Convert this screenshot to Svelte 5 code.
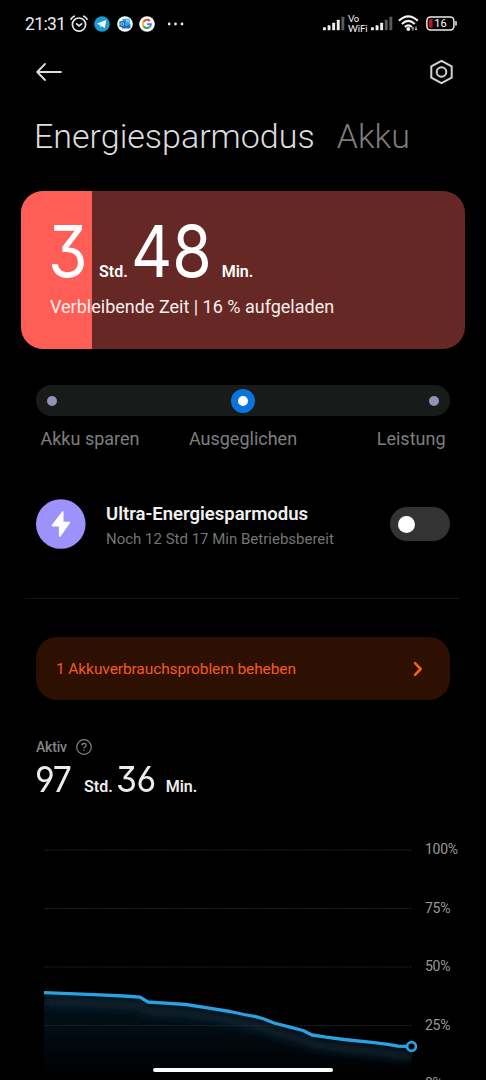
<script>
  const remaining = { hours: '3', minutes: '48', percent: 16 };
  const active = { hours: '97', minutes: '36' };

  const modes = ['Akku sparen', 'Ausgeglichen', 'Leistung'];
  let mode = $state(1);
  let ultra = $state(false);

  const levels = [100, 75, 50, 25, 0];
  const gridY = (level) => 20 + (100 - level) * 2.34;

  // x from the left edge of the plot, y from the top of the chart
  const points = [
    [0, 162.7], [50, 164.6], [80, 166], [96, 167.2], [104, 172], [125, 173.3], [142, 174.5],
    [165, 178.2], [186, 181.5], [200, 184.5], [212, 186.7], [220, 189], [230, 193],
    [246, 197.2], [259, 200.5], [268, 205], [282, 207.2], [300, 209.5], [328, 212.3],
    [344, 214.3], [354, 216.2], [368, 216.5]
  ];
  const line = 'M' + points.map((p) => p.join(' ')).join('L');
  const area = line + 'V250H0Z';
</script>

<div class="screen">
  <div class="status">
    <span class="clock">21:31</span>
    <svg class="alarm" width="18" height="18" viewBox="0 0 18 18">
      <g fill="none" stroke="#e8e8e8" stroke-width="1.7" stroke-linecap="round">
        <circle cx="9" cy="9.6" r="6.6" />
        <path d="M6.6 8.8L9 10.9L11.6 8.8" />
        <path d="M1 4.2Q2 2.2 4.2 1.2M17 4.2Q16 2.2 13.8 1.2" />
      </g>
    </svg>
    <svg class="app" width="16" height="16" viewBox="0 0 16 16">
      <circle cx="8" cy="8" r="7.8" fill="#1c9ad2" />
      <path d="M2.7 7.8L12.3 4L10.8 12.2L7.8 10.1L6.3 11.6L5.9 9Z" fill="#fff" />
      <path d="M5.9 9L10.3 5.9L7 9.5L6.3 11.6Z" fill="#a9d7ee" />
    </svg>
    <svg class="app" width="16" height="16" viewBox="0 0 16 16">
      <circle cx="8" cy="8" r="7.8" fill="#fff" />
      <rect x="5.4" y="2.8" width="7.4" height="8" rx=".6" fill="#38a2e0" />
      <path d="M9 2.8H12.8V6.4H9Z" fill="#60c6f4" />
      <path d="M4.8 8.2L9.4 10.2L13.4 7.4V12.6H4.8Z" fill="#1b6fc0" />
      <rect x="2.4" y="5.2" width="5.8" height="5.8" rx=".6" fill="#1468b8" />
      <circle cx="5.3" cy="8.1" r="1.5" fill="none" stroke="#b9dcf5" stroke-width=".9" />
    </svg>
    <svg class="app" width="16" height="16" viewBox="0 0 16 16">
      <circle cx="8" cy="8" r="7.8" fill="#fff" />
      <g fill="none" stroke-width="1.9">
        <path d="M10.9 5A4.1 4.1 0 0 0 4.4 6" stroke="#e44236" />
        <path d="M4.4 6A4.1 4.1 0 0 0 4.4 10" stroke="#f4b91f" />
        <path d="M4.4 10A4.1 4.1 0 0 0 10.6 11.1" stroke="#34a353" />
        <path d="M10.6 11.1A4.1 4.1 0 0 0 12 8.2H8" stroke="#4285e8" />
      </g>
    </svg>
    <svg class="dots" width="17" height="4" viewBox="0 0 17 4" fill="#e8e8e8">
      <circle cx="2.2" cy="2" r="1.4" /><circle cx="8.5" cy="2" r="1.4" /><circle cx="15" cy="2" r="1.4" />
    </svg>
    <div class="radio">
      {@render signal(4)}
      <span class="vowifi"><span>Vo</span><span>WiFi</span></span>
      {@render signal(3)}
      <svg class="wifi" width="21" height="17" viewBox="0 0 21 17">
        <g fill="none" stroke="#f2f2f2" stroke-width="2.1">
          <path d="M.9 5.8Q10.3 -3 19.8 5.8" />
          <path d="M3.9 9Q10.3 2.8 16.8 9" />
          <path d="M6.9 12Q10.3 8.7 13.8 12" />
        </g>
        <circle cx="10.3" cy="14" r="1.9" fill="#f2f2f2" />
        <path d="M14.9 15.6V12.4M14 13.4L14.9 12.4L15.8 13.4M18 11.6V15M17.1 14L18 15L18.9 14" fill="none" stroke="#f2f2f2" stroke-width=".9" />
      </svg>
      <svg class="battery" width="32" height="15" viewBox="0 0 32 15">
        <rect x=".9" y=".9" width="27" height="13" rx="3.6" fill="none" stroke="#ececec" stroke-width="1.5" />
        <path d="M4.4 3H6.6V11.8H4.4Q3 11.8 3 10.4V4.4Q3 3 4.4 3Z" fill="#c8101c" />
        <path d="M30 5.2V9.6" stroke="#ececec" stroke-width="1.6" />
        <text x="14.5" y="11.4" text-anchor="middle">{remaining.percent}</text>
      </svg>
    </div>
  </div>

  <header>
    <svg width="27" height="18" viewBox="0 0 27 18" fill="none" stroke="#dedede" stroke-width="1.8" stroke-linecap="round" stroke-linejoin="round">
      <path d="M9 1L1.2 9L9 17M1.2 9H25" />
    </svg>
    <svg width="25" height="26" viewBox="0 0 25 26" fill="none" stroke="#d2d2d2" stroke-width="2" stroke-linejoin="round">
      <path d="M12.5 1.8L22.7 7.3V18.7L12.5 24.2L2.3 18.7V7.3Z" />
      <circle cx="12.5" cy="13" r="4.8" />
    </svg>
  </header>

  <nav>
    <span class="current">Energiesparmodus</span>
    <span class="other">Akku</span>
  </nav>

  <section class="card">
    <div class="level" style:width="{remaining.percent}%"></div>
    <div class="content">
      <div class="time big">
        <b>{remaining.hours}</b><i>Std.</i><b class="second">{remaining.minutes}</b><i>Min.</i>
      </div>
      <p>Verbleibende Zeit | {remaining.percent} % aufgeladen</p>
    </div>
  </section>

  <div class="slider">
    {#each modes as name, i}
      <button class:selected={mode === i} aria-label={name} onclick={() => (mode = i)}></button>
    {/each}
  </div>
  <div class="modes">
    {#each modes as name}
      <span>{name}</span>
    {/each}
  </div>

  <section class="ultra">
    <svg width="50" height="50" viewBox="0 0 50 50">
      <circle cx="24.8" cy="25" r="24.8" fill="#9d91fb" />
      <path d="M26.2 12.4L15.6 26.2Q15.2 27.4 16.4 27.4H22.9V37Q23.3 38.4 24.5 37.4L34 24Q34.5 22.8 33.2 22.7H27.5V13Q27.2 11.6 26.2 12.4Z" fill="#fff" />
    </svg>
    <div class="text">
      <h2>Ultra-Energiesparmodus</h2>
      <p>Noch 12 Std 17 Min Betriebsbereit</p>
    </div>
    <button class="toggle" class:on={ultra} aria-label="Ultra-Energiesparmodus" onclick={() => (ultra = !ultra)}></button>
  </section>

  <hr />

  <section class="problem">
    <span>1 Akkuverbrauchsproblem beheben</span>
    <svg width="10" height="16" viewBox="0 0 10 16" fill="none" stroke="#f9600e" stroke-width="2.6" stroke-linecap="round" stroke-linejoin="round">
      <path d="M2 2.2L7.7 8L2 13.8" />
    </svg>
  </section>

  <section class="active">
    <div class="label">
      <span>Aktiv</span>
      <svg width="16" height="16" viewBox="0 0 16 16" fill="none" stroke="#858585" stroke-width="1.2">
        <circle cx="8" cy="8" r="7.3" />
        <path d="M5.8 6.4Q5.9 4.3 8 4.3Q10.2 4.4 10.2 6.2Q10.1 7.3 8.9 8Q8 8.6 8 9.7M8 10.8V12.1" />
      </svg>
    </div>
    <div class="time small">
      <b>{active.hours}</b><i>Std.</i><b class="second">{active.minutes}</b><i>Min.</i>
    </div>
  </section>

  <section class="chart">
    <svg width="376" height="250" viewBox="0 0 376 250">
      <defs>
        <linearGradient id="fade" x1="0" y1="162" x2="0" y2="246" gradientUnits="userSpaceOnUse">
          <stop offset="0" stop-color="#03131e" />
          <stop offset=".5" stop-color="#020b12" />
          <stop offset="1" stop-color="#000" />
        </linearGradient>
        <filter id="soft" x="-10%" y="-50%" width="120%" height="220%">
          <feGaussianBlur stdDeviation="4" />
        </filter>
        <clipPath id="under"><path d={area} /></clipPath>
      </defs>
      <path d={area} fill="url(#fade)" />
      <g clip-path="url(#under)">
        <path d={line} transform="translate(0 9)" fill="none" stroke="#08202d" stroke-width="9" filter="url(#soft)" />
      </g>
      {#each levels.slice(0, 4) as level}
        <path d="M0 {gridY(level)}H368" stroke="#262626" stroke-width="1" stroke-dasharray="1.5 1" />
      {/each}
      <path d={line} fill="none" stroke="#2aa2e2" stroke-width="3.3" stroke-linejoin="round" />
      <circle cx="367.5" cy="216.5" r="4.4" fill="#000" stroke="#2aa2e2" stroke-width="2.7" />
    </svg>
    <div class="scale">
      {#each levels as level}
        <span>{level}%</span>
      {/each}
    </div>
  </section>

  <div class="home"></div>
</div>

{#snippet signal(strength)}
  <svg class="signal" width="22" height="15" viewBox="0 0 22 15">
    {#each [3, 5, 7.5, 10.5, 13.5] as h, i}
      <rect x={i * 4.6} y={14.2 - h} width="2.9" height={h} rx=".6" fill={i < strength ? '#f0f0f0' : '#5a5a5a'} />
    {/each}
  </svg>
{/snippet}

<style>
  :global(body) {
    margin: 0;
    background: #000;
  }

  .screen {
    position: relative;
    width: 486px;
    height: 1080px;
    overflow: hidden;
    background: #000;
    color: #fff;
    font-family: Roboto, sans-serif;
  }

  svg {
    display: block;
    flex: none;
  }

  p, h2 {
    margin: 0;
  }

  button {
    padding: 0;
    border: 0;
  }

  .status {
    display: flex;
    align-items: center;
    height: 47px;
    padding: 0 28px 0 25px;
  }

  .clock {
    width: 45px;
    font-size: 17.5px;
    letter-spacing: -0.6px;
    color: #ececec;
  }

  .app {
    margin-left: 6.5px;
  }

  .alarm + .app {
    margin-left: 6px;
  }

  .dots {
    margin-left: 12px;
  }

  .radio {
    display: flex;
    align-items: center;
    margin-left: auto;
  }

  .vowifi {
    display: flex;
    flex-direction: column;
    width: 19px;
    margin: 0 4px 0 3px;
    font: 400 9.5px/9.5px Lato, sans-serif;
    color: #f4f4f4;
  }

  .wifi {
    margin: 0 7px 0 5px;
  }

  .battery text {
    fill: #fff;
    font: 400 11px Roboto, sans-serif;
  }

  header {
    display: flex;
    align-items: center;
    justify-content: space-between;
    height: 50px;
    padding: 0 32px 0 36px;
  }

  nav {
    display: flex;
    gap: 22px;
    height: 94px;
    padding-left: 34px;
    font-size: 34px;
    font-weight: 300;
    line-height: 78px;
    box-sizing: border-box;
  }

  .current {
    color: #ddd;
  }

  .other {
    color: #7c7c7c;
  }

  .card {
    display: grid;
    width: 444px;
    height: 158px;
    margin-left: 21px;
    border-radius: 22px;
    overflow: hidden;
    background: #652824;
  }

  .level, .content {
    grid-area: 1 / 1;
  }

  .level {
    background: #ff5e57;
  }

  .content {
    padding: 20px 0 0 29px;
  }

  .content p {
    margin-top: 5px;
    font-size: 18px;
    line-height: 22px;
    color: #fbeeed;
  }

  .time {
    display: flex;
    align-items: baseline;
    white-space: nowrap;
  }

  .time b {
    font-family: Inter, sans-serif;
    font-weight: 400;
    font-feature-settings: "cv09", "cv03", "cv04";
    transform: scaleX(0.9);
    transform-origin: left;
  }

  .time i {
    font-style: normal;
    font-weight: 600;
    font-size: 16px;
  }

  .big {
    height: 80px;
    line-height: 80px;
  }

  .big b {
    width: 51px;
    margin-left: -2px;
    font-size: 71px;
  }

  .big .second {
    width: 91px;
    margin-left: 3px;
  }

  .small {
    height: 40px;
    line-height: 45px;
    color: #ececec;
  }

  .small b {
    width: 49px;
    margin-left: -1px;
    font-size: 36px;
    letter-spacing: -0.5px;
    transform: scaleX(0.94);
  }

  .small .second {
    width: 50px;
    margin-left: 3px;
  }

  .slider {
    display: flex;
    align-items: center;
    justify-content: space-between;
    height: 31px;
    margin: 36px 36px 0;
    padding: 0 11px;
    border-radius: 16px;
    background: #191b1b;
  }

  .slider button {
    width: 10px;
    height: 10px;
    border-radius: 50%;
    background: #9292b4;
  }

  .slider .selected {
    width: 24px;
    height: 24px;
    border: 7px solid #0975dc;
    background: #fff;
  }

  .modes {
    display: grid;
    grid-template-columns: 1fr auto 1fr;
    height: 24px;
    margin-top: 11px;
    padding: 0 40.5px;
    font-size: 18px;
    line-height: 24px;
    color: #7e7e7e;
  }

  .modes span:last-child {
    text-align: right;
  }

  .ultra {
    display: flex;
    align-items: center;
    height: 50px;
    margin: 48px 36px 0;
  }

  .ultra .text {
    flex: 1;
    padding: 5px 0 0 20px;
  }

  .ultra h2 {
    font-size: 18.5px;
    font-weight: 600;
    line-height: 25px;
    color: #f0f0f0;
  }

  .ultra p {
    font-size: 15px;
    line-height: 25px;
    color: #747474;
  }

  .toggle {
    display: flex;
    align-items: center;
    width: 60px;
    height: 34px;
    padding: 0 8px;
    border-radius: 17px;
    background: #333;
  }

  .toggle::before {
    content: "";
    width: 17px;
    height: 17px;
    border-radius: 50%;
    background: #fff;
  }

  .toggle.on {
    justify-content: flex-end;
    background: #0975dc;
  }

  hr {
    height: 1px;
    margin: 49px 26px 0 25px;
    border: 0;
    background: #151515;
  }

  .problem {
    display: flex;
    align-items: center;
    justify-content: space-between;
    height: 63px;
    margin: 38px 36px 0;
    padding: 0 27px 0 20px;
    border-radius: 21px;
    background: #2d1002;
    color: #f45a22;
    font-size: 15.5px;
    letter-spacing: -0.1px;
  }

  .active {
    margin: 37px 0 0 36px;
  }

  .label {
    display: flex;
    align-items: center;
    gap: 9px;
    height: 20px;
    font-size: 14px;
    letter-spacing: -0.2px;
    font-weight: 500;
    color: #858585;
  }

  .chart {
    display: flex;
    gap: 5px;
    margin: 33px 0 0 44px;
  }

  .scale {
    font-size: 14px;
    letter-spacing: -0.3px;
    color: #999;
  }

  .scale span {
    display: block;
    height: 58.5px;
    line-height: 38px;
  }

  .home {
    position: absolute;
    left: 153px;
    bottom: 8px;
    width: 180px;
    height: 4px;
    border-radius: 2px;
    background: #fff;
  }
</style>
